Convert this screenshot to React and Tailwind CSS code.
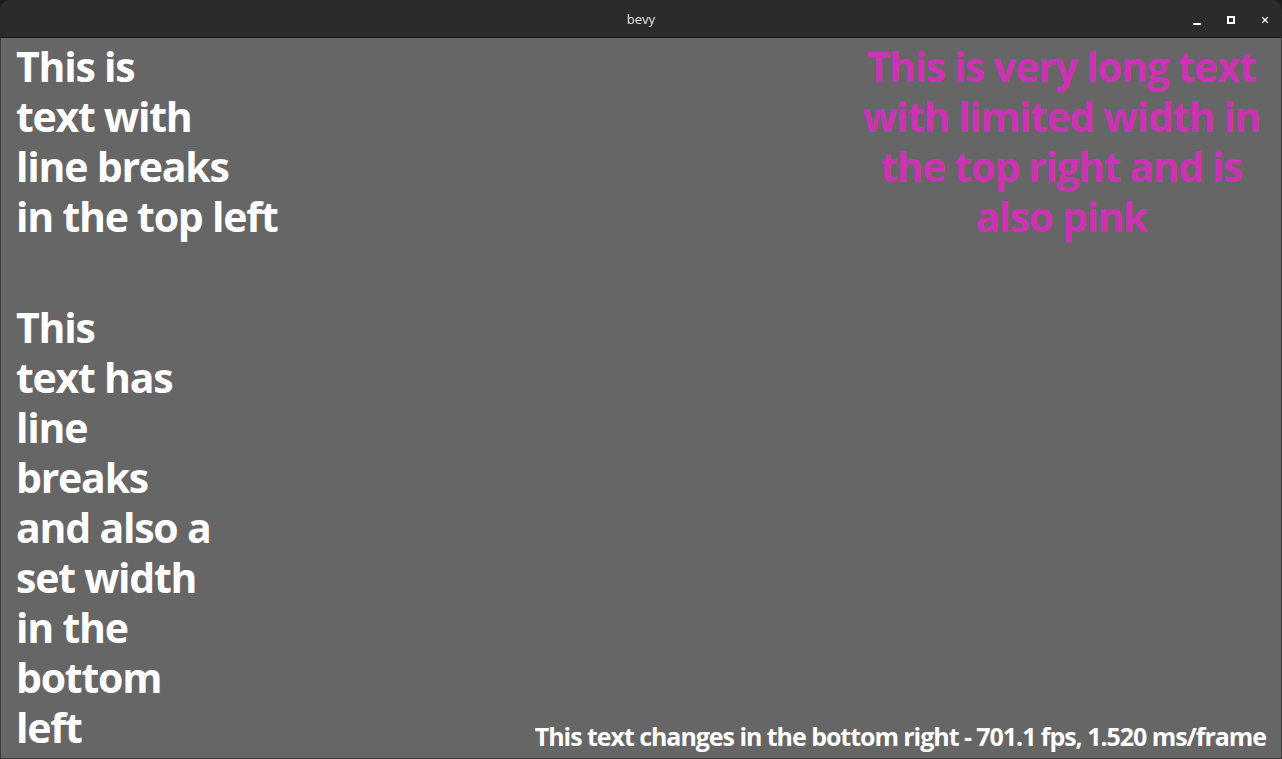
import { X } from 'lucide-react'

const FONT = { fontFamily: '"Open Sans", "Noto Sans", sans-serif' }

function TitleBar() {
  return (
    <div className="h-[38px] shrink-0 bg-[#2b2b2b] rounded-t-[10px] border-b border-[#1a1a1a] flex items-center relative">
      <div className="flex-1 text-center text-[13px] pt-[3px] text-[#dedede]" style={{ fontFamily: '"Noto Sans", sans-serif' }}>
        bevy
      </div>
      <div className="absolute right-[12px] top-0 h-full flex items-center gap-[24px] pt-[2px] text-white">
        <span className="w-[10px] h-[10px] flex items-end justify-center"><span className="w-[8px] h-[2px] bg-white" /></span>
        <span className="w-[10px] h-[10px] flex items-center justify-center"><span className="w-[8px] h-[8px] border-2 border-white" /></span>
        <span className="w-[10px] h-[10px] flex items-center justify-center"><X size={12} strokeWidth={3} /></span>
      </div>
    </div>
  )
}

export default function App() {
  return (
    <div className="w-[1282px] h-[759px] bg-[#1e1e1e] flex flex-col overflow-hidden" style={FONT}>
      <TitleBar />
      <div className="flex-1 bg-[#666666] border-x border-b border-[#3a3a3a] flex justify-between px-[15px] pt-[3px] pb-[6px] font-bold text-white">
        <div className="flex flex-col justify-between text-[41px] leading-[50px] tracking-[-0.03em] whitespace-nowrap">
          <div>
            This is<br />text with<br />line breaks<br />in the top left
          </div>
          <div>
            This<br />text has<br />line<br />breaks<br />and also a<br />set width<br />in the<br />bottom<br />left
          </div>
        </div>
        <div className="flex flex-col justify-between items-end">
          <div className="w-[404px] mr-[3px] text-center text-[41px] leading-[50px] tracking-[-0.035em] text-[#cc33b3]">
            This is very long text with limited width in the top right and is also pink
          </div>
          <div className="text-[25px] leading-[32px] tracking-[-0.042em] whitespace-nowrap">
            This text changes in the bottom right - 701.1 fps, 1.520 ms/frame
          </div>
        </div>
      </div>
    </div>
  )
}
